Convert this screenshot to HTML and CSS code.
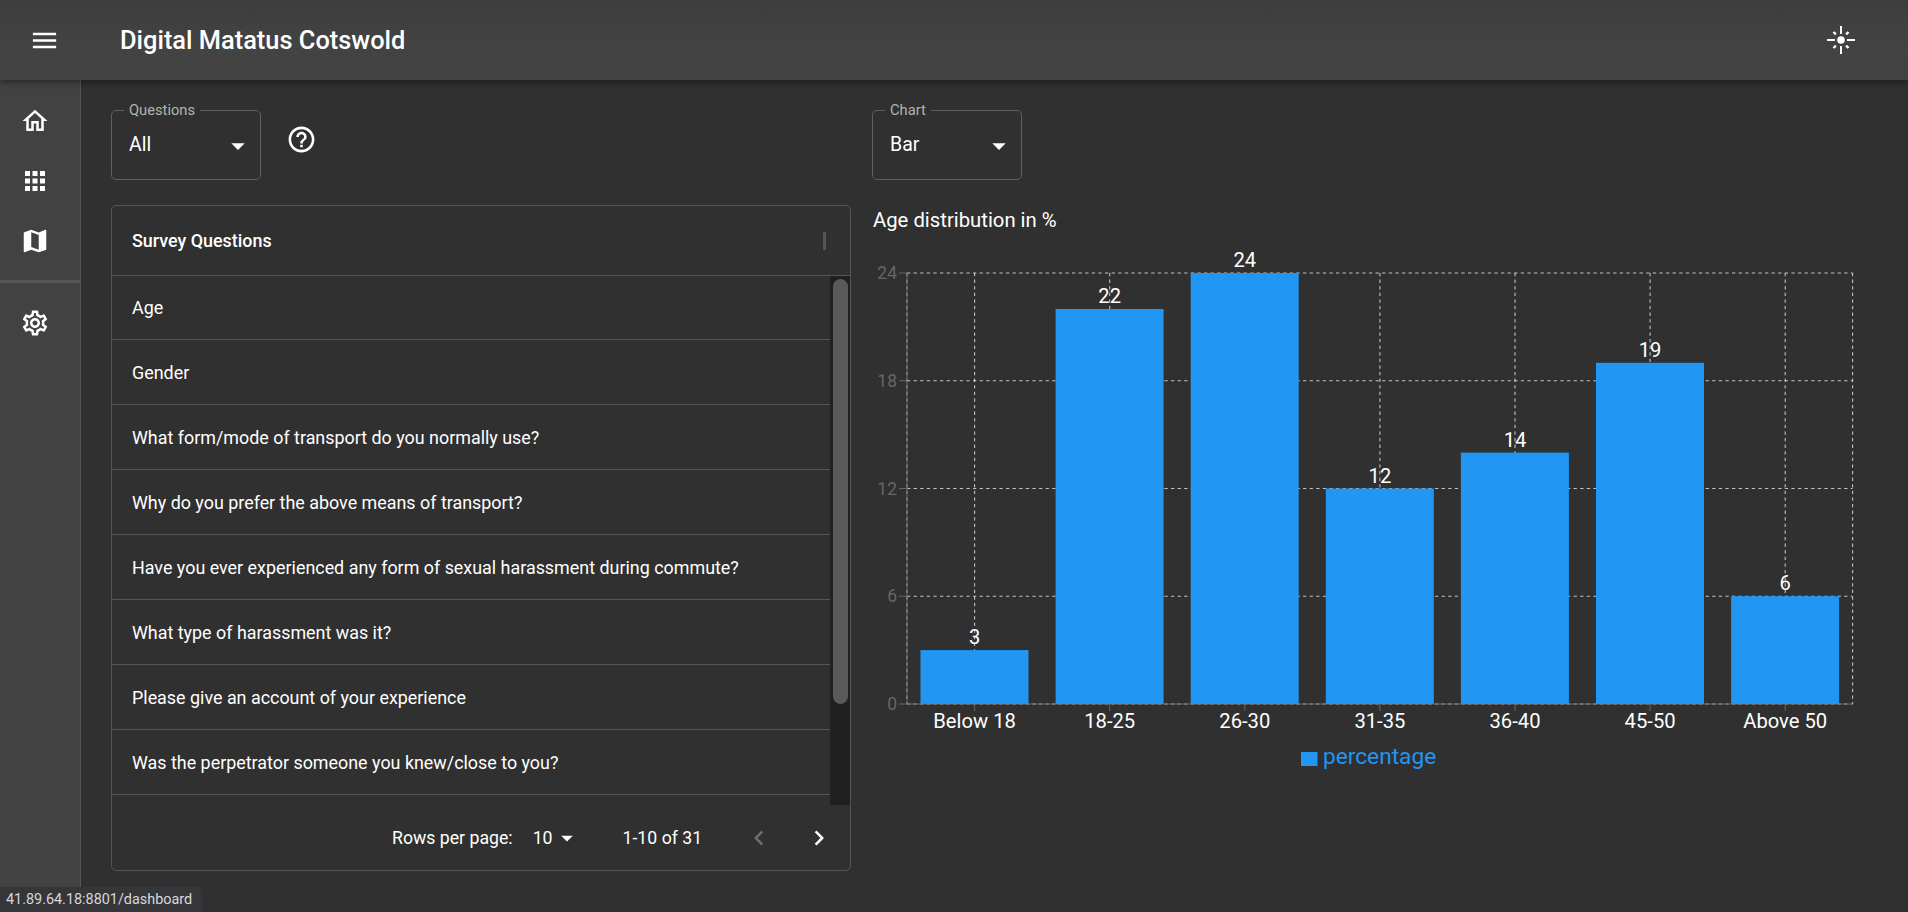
FILE: index.html
```html
<!DOCTYPE html>
<html lang="en">
<head>
    <meta charset="UTF-8">
    <meta name="viewport" content="width=device-width, initial-scale=1.0">
    <title>Digital Matatus Cotswold</title>
    <link rel="stylesheet" href="styles.css">
</head>
<body>
    <header class="topbar">
        <div class="topbar-left">
            <svg class="icon menu-icon" viewBox="0 0 24 24"><path d="M3 18h18v-2H3v2zm0-5h18v-2H3v2zm0-7v2h18V6H3z"/></svg>
            <h1 class="app-title">Digital Matatus Cotswold</h1>
        </div>
        <svg class="theme-icon" viewBox="0 0 28 28">
            <circle cx="14" cy="14" r="3.8"/>
            <rect x="13" y="0" width="2" height="8"/>
            <rect x="13" y="20" width="2" height="8"/>
            <rect x="0" y="13" width="8" height="2"/>
            <rect x="20" y="13" width="8" height="2"/>
            <rect x="6.5" y="5.5" width="2.4" height="3.4" transform="rotate(-45 7.7 7.2)"/>
            <rect x="19.1" y="5.5" width="2.4" height="3.4" transform="rotate(45 20.3 7.2)"/>
            <rect x="6.5" y="19.1" width="2.4" height="3.4" transform="rotate(45 7.7 20.8)"/>
            <rect x="19.1" y="19.1" width="2.4" height="3.4" transform="rotate(-45 20.3 20.8)"/>
        </svg>
    </header>

    <div class="layout">
        <nav class="sidebar">
            <div class="nav-group">
                <a class="nav-item"><svg class="icon nav-icon" viewBox="0 0 24 24"><path d="M12 5.69l5 4.5V18h-2v-6H9v6H7v-7.81l5-4.5M12 3L2 12h3v8h6v-6h2v6h6v-8h3L12 3z"/></svg></a>
                <a class="nav-item"><svg class="icon nav-icon" viewBox="0 0 24 24"><path d="M4 8h4V4H4v4zm6 12h4v-4h-4v4zm-6 0h4v-4H4v4zm0-6h4v-4H4v4zm6 0h4v-4h-4v4zm6-10v4h4V4h-4zm-6 4h4V4h-4v4zm6 6h4v-4h-4v4zm0 6h4v-4h-4v4z"/></svg></a>
                <a class="nav-item"><svg class="icon nav-icon" viewBox="0 0 24 24"><path d="M20.5 3l-.16.03L15 5.1 9 3 3.36 4.9c-.21.07-.36.25-.36.48V20.5c0 .28.22.5.5.5l.16-.03L9 18.9l6 2.1 5.64-1.9c.21-.07.36-.25.36-.48V3.5c0-.28-.22-.5-.5-.5zM15 19l-6-2.11V5l6 2.11V19z"/></svg></a>
            </div>
            <div class="nav-group nav-group-lower">
                <a class="nav-item"><svg class="icon nav-icon" viewBox="0 0 24 24"><path d="M19.43 12.98c.04-.32.07-.64.07-.98 0-.34-.03-.66-.07-.98l2.11-1.65c.19-.15.24-.42.12-.64l-2-3.46c-.09-.16-.26-.25-.44-.25-.06 0-.12.01-.17.03l-2.49 1c-.52-.4-1.08-.73-1.69-.98l-.38-2.65C14.46 2.18 14.25 2 14 2h-4c-.25 0-.46.18-.49.42l-.38 2.65c-.61.25-1.17.59-1.69.98l-2.49-1c-.06-.02-.12-.03-.18-.03-.17 0-.34.09-.43.25l-2 3.46c-.13.22-.07.49.12.64l2.11 1.65c-.04.32-.07.65-.07.98 0 .33.03.66.07.98l-2.11 1.65c-.19.15-.24.42-.12.64l2 3.46c.09.16.26.25.44.25.06 0 .12-.01.17-.03l2.49-1c.52.4 1.08.73 1.69.98l.38 2.65c.03.24.24.42.49.42h4c.25 0 .46-.18.49-.42l.38-2.65c.61-.25 1.17-.59 1.69-.98l2.49 1c.06.02.12.03.18.03.17 0 .34-.09.43-.25l2-3.46c.12-.22.07-.49-.12-.64l-2.11-1.65zm-1.98-1.71c.04.31.05.52.05.73 0 .21-.02.43-.05.73l-.14 1.13.89.7 1.08.84-.7 1.21-1.27-.51-1.04-.42-.9.68c-.43.32-.84.56-1.25.73l-1.06.43-.16 1.13-.2 1.35h-1.4l-.19-1.35-.16-1.13-1.06-.43c-.43-.18-.83-.41-1.23-.71l-.91-.7-1.06.43-1.27.51-.7-1.21 1.08-.84.89-.7-.14-1.13c-.03-.31-.05-.54-.05-.74s.02-.43.05-.73l.14-1.13-.89-.7-1.08-.84.7-1.21 1.27.51 1.04.42.9-.68c.43-.32.84-.56 1.25-.73l1.06-.43.16-1.13.2-1.35h1.39l.19 1.35.16 1.13 1.06.43c.43.18.83.41 1.23.71l.91.7 1.06-.43 1.27-.51.7 1.21-1.07.85-.89.7.14 1.13zM12 8c-2.21 0-4 1.79-4 4s1.79 4 4 4 4-1.79 4-4-1.79-4-4-4zm0 6c-1.1 0-2-.9-2-2s.9-2 2-2 2 .9 2 2-.9 2-2 2z"/></svg></a>
            </div>
        </nav>

        <main class="content">
            <section class="column-left">
                <div class="controls">
                    <div class="select-box">
                        <span class="select-label">Questions</span>
                        <span class="select-value">All</span>
                        <svg class="icon select-arrow" viewBox="0 0 24 24"><path d="M7 10l5 5 5-5z"/></svg>
                    </div>
                    <svg class="icon help-icon" viewBox="0 0 24 24"><path d="M11 18h2v-2h-2v2zm1-16C6.48 2 2 6.48 2 12s4.48 10 10 10 10-4.48 10-10S17.52 2 12 2zm0 18c-4.41 0-8-3.59-8-8s3.59-8 8-8 8 3.59 8 8-3.59 8-8 8zm0-14c-2.21 0-4 1.79-4 4h2c0-1.1.9-2 2-2s2 .9 2 2c0 2-3 1.75-3 5h2c0-2.25 3-2.5 3-5 0-2.21-1.79-4-4-4z"/></svg>
                </div>

                <div class="table-card">
                    <div class="table-head">
                        <span>Survey Questions</span>
                        <span class="col-sep"></span>
                    </div>
                    <div class="table-body">
                        <div class="table-rows">
                            <div class="table-row">Age</div>
                            <div class="table-row">Gender</div>
                            <div class="table-row">What form/mode of transport do you normally use?</div>
                            <div class="table-row">Why do you prefer the above means of transport?</div>
                            <div class="table-row">Have you ever experienced any form of sexual harassment during commute?</div>
                            <div class="table-row">What type of harassment was it?</div>
                            <div class="table-row">Please give an account of your experience</div>
                            <div class="table-row">Was the perpetrator someone you knew/close to you?</div>
                        </div>
                        <div class="scroll-track"><div class="scroll-thumb"></div></div>
                    </div>
                    <div class="table-foot">
                        <span class="rows-label">Rows per page:</span>
                        <span class="rows-value">10</span>
                        <svg class="icon rows-arrow" viewBox="0 0 24 24"><path d="M7 10l5 5 5-5z"/></svg>
                        <span class="page-range">1-10 of 31</span>
                        <svg class="icon page-btn page-btn-off" viewBox="0 0 24 24"><path d="M15.41 7.41L14 6l-6 6 6 6 1.41-1.41L10.83 12z"/></svg>
                        <svg class="icon page-btn" viewBox="0 0 24 24"><path d="M10 6L8.59 7.41 13.17 12l-4.58 4.59L10 18l6-6z"/></svg>
                    </div>
                </div>
            </section>

            <section class="column-right">
                <div class="controls">
                    <div class="select-box">
                        <span class="select-label">Chart</span>
                        <span class="select-value">Bar</span>
                        <svg class="icon select-arrow" viewBox="0 0 24 24"><path d="M7 10l5 5 5-5z"/></svg>
                    </div>
                </div>
                <h2 class="chart-title">Age distribution in %</h2>
                <svg class="chart" viewBox="0 -10 1000 540" width="1000" height="540">
                    <g class="grid">
                        <line x1="35" x2="980.6" y1="23" y2="23"/>
                        <line x1="35" x2="980.6" y1="130.75" y2="130.75"/>
                        <line x1="35" x2="980.6" y1="238.5" y2="238.5"/>
                        <line x1="35" x2="980.6" y1="346.25" y2="346.25"/>
                        <line x1="35" x2="980.6" y1="454" y2="454"/>
                        <line x1="35" x2="35" y1="23" y2="454"/>
                        <line x1="102.6" x2="102.6" y1="23" y2="454"/>
                        <line x1="237.7" x2="237.7" y1="23" y2="454"/>
                        <line x1="372.8" x2="372.8" y1="23" y2="454"/>
                        <line x1="507.9" x2="507.9" y1="23" y2="454"/>
                        <line x1="643" x2="643" y1="23" y2="454"/>
                        <line x1="778.1" x2="778.1" y1="23" y2="454"/>
                        <line x1="913.2" x2="913.2" y1="23" y2="454"/>
                        <line x1="980.6" x2="980.6" y1="23" y2="454"/>
                    </g>
                    <g class="axis">
                        <line x1="35" x2="35" y1="23" y2="454"/>
                        <line x1="35" x2="980.6" y1="454" y2="454"/>
                        <line x1="27" x2="35" y1="23" y2="23"/>
                        <line x1="27" x2="35" y1="130.75" y2="130.75"/>
                        <line x1="27" x2="35" y1="238.5" y2="238.5"/>
                        <line x1="27" x2="35" y1="346.25" y2="346.25"/>
                        <line x1="27" x2="35" y1="454" y2="454"/>
                        <line x1="102.6" x2="102.6" y1="454" y2="461"/>
                        <line x1="237.7" x2="237.7" y1="454" y2="461"/>
                        <line x1="372.8" x2="372.8" y1="454" y2="461"/>
                        <line x1="507.9" x2="507.9" y1="454" y2="461"/>
                        <line x1="643" x2="643" y1="454" y2="461"/>
                        <line x1="778.1" x2="778.1" y1="454" y2="461"/>
                        <line x1="913.2" x2="913.2" y1="454" y2="461"/>
                    </g>
                    <g class="y-labels">
                        <text x="25" y="29">24</text>
                        <text x="25" y="137">18</text>
                        <text x="25" y="244.5">12</text>
                        <text x="25" y="352">6</text>
                        <text x="25" y="460">0</text>
                    </g>
                    <g class="bars">
                        <rect x="48.5" y="400.1" width="108" height="53.9"/>
                        <rect x="183.6" y="59" width="108" height="395"/>
                        <rect x="318.7" y="23" width="108" height="431"/>
                        <rect x="453.8" y="238.5" width="108" height="215.5"/>
                        <rect x="588.9" y="202.6" width="108" height="251.4"/>
                        <rect x="724" y="112.8" width="108" height="341.2"/>
                        <rect x="859.1" y="346.2" width="108" height="107.8"/>
                    </g>
                    <g class="value-labels">
                        <text x="102.6" y="394">3</text>
                        <text x="237.7" y="53">22</text>
                        <text x="372.8" y="17">24</text>
                        <text x="507.9" y="232.5">12</text>
                        <text x="643" y="196.6">14</text>
                        <text x="778.1" y="106.8">19</text>
                        <text x="913.2" y="340.2">6</text>
                    </g>
                    <g class="x-labels">
                        <text x="102.6" y="477.5">Below 18</text>
                        <text x="237.7" y="477.5">18-25</text>
                        <text x="372.8" y="477.5">26-30</text>
                        <text x="507.9" y="477.5">31-35</text>
                        <text x="643" y="477.5">36-40</text>
                        <text x="778.1" y="477.5">45-50</text>
                        <text x="913.2" y="477.5">Above 50</text>
                    </g>
                    <rect class="legend-mark" x="429" y="502" width="16.5" height="14"/>
                    <text class="legend-text" x="451" y="514">percentage</text>
                </svg>
            </section>
        </main>
    </div>

    <div class="status-bar">41.89.64.18:8801/dashboard</div>
</body>
</html>
```

FILE: styles.css
```css
* {
    box-sizing: border-box;
}
html, body {
    height: 100%;
}
body {
    margin: 0;
    font-family: Roboto, "Liberation Sans", sans-serif;
    background-color: #303030;
    color: #fff;
    overflow: hidden;
    display: flex;
    flex-direction: column;
}
.icon {
    fill: currentColor;
    display: block;
    flex: none;
}

/* top bar */
.topbar {
    height: 80px;
    flex: none;
    display: flex;
    align-items: center;
    justify-content: space-between;
    padding: 0 53px 0 29px;
    background: linear-gradient(#3d3d3d, #434343 60%, #424242);
    box-shadow: 0 2px 4px -1px rgba(0, 0, 0, 0.2), 0 4px 5px 0 rgba(0, 0, 0, 0.14), 0 1px 10px 0 rgba(0, 0, 0, 0.12);
    position: relative;
    z-index: 2;
}
.topbar-left {
    display: flex;
    align-items: center;
}
.menu-icon {
    width: 31px;
    height: 31px;
}
.app-title {
    margin: 0 0 0 60px;
    font-size: 25.4px;
    font-weight: 500;
}
.theme-icon {
    width: 28px;
    height: 28px;
    fill: #fff;
}

/* layout */
.layout {
    flex: 1;
    display: flex;
    min-height: 0;
}
.sidebar {
    width: 81px;
    flex: none;
    background-color: #424242;
    border-right: 1px solid #555;
}
.nav-group {
    padding: 11px 0 9px;
    border-bottom: 3px solid #555;
}
.nav-group-lower {
    border-bottom: none;
    padding-top: 10px;
}
.nav-item {
    height: 60px;
    display: flex;
    align-items: center;
    padding-left: 20px;
}
.nav-icon {
    width: 30px;
    height: 30px;
}
.content {
    flex: 1;
    display: flex;
    gap: 21px;
    padding: 30px 0 0 30px;
    min-width: 0;
}
.column-left {
    width: 740px;
    flex: none;
}
.column-right {
    flex: 1;
    min-width: 0;
}

/* selects */
.controls {
    display: flex;
    height: 70px;
}
.select-box {
    position: relative;
    width: 150px;
    height: 70px;
    border: 1px solid #5f5f5f;
    border-radius: 5px;
    display: flex;
    align-items: flex-start;
    padding: 21px 0 0 17px;
}
.select-label {
    position: absolute;
    top: -9px;
    left: 12px;
    padding: 0 5px;
    background-color: #303030;
    color: #b3b3b3;
    font-size: 14.7px;
    line-height: 16px;
}
.select-value {
    font-size: 19.5px;
    line-height: 26px;
}
.select-arrow {
    position: absolute;
    top: 19px;
    right: 6px;
    width: 32px;
    height: 32px;
}
.help-icon {
    width: 31px;
    height: 31px;
    margin: 14px 0 0 25px;
}

/* table */
.table-card {
    margin-top: 25px;
    height: 666px;
    border: 1px solid #555;
    border-radius: 5px;
    display: flex;
    flex-direction: column;
    font-size: 17.9px;
}
.table-head {
    height: 70px;
    flex: none;
    display: flex;
    align-items: center;
    justify-content: space-between;
    padding: 0 24px 0 20px;
    font-weight: 500;
    border-bottom: 1px solid #555;
}
.col-sep {
    width: 3px;
    height: 18px;
    background-color: #555;
}
.table-body {
    flex: 1;
    min-height: 0;
    display: flex;
    overflow: hidden;
}
.table-rows {
    flex: 1;
    min-width: 0;
}
.table-row {
    height: 65px;
    display: flex;
    align-items: center;
    padding-left: 20px;
    border-bottom: 1px solid #555;
    margin-right: -1px;
}
.table-row:first-child {
    height: 64px;
}
.scroll-track {
    width: 20px;
    flex: none;
    background-color: #202020;
    padding: 3px 2px 0 3px;
    position: relative;
}
.scroll-thumb {
    height: 425px;
    background-color: #5a5a5a;
    border-radius: 8px;
}
.table-foot {
    height: 65px;
    flex: none;
    display: flex;
    align-items: center;
    padding-left: 280px;
    font-size: 17.7px;
}
.rows-value {
    margin-left: 20px;
}
.rows-arrow {
    width: 28px;
    height: 28px;
}
.page-range {
    margin-left: 42px;
}
.page-btn {
    width: 30px;
    height: 30px;
    margin-left: 30px;
}
.page-btn-off {
    margin-left: 42px;
    color: #6d6d6d;
}

/* chart */
.chart-title {
    margin: 28px 0 0 1px;
    font-size: 20.3px;
    font-weight: 400;
    line-height: 24px;
}
.chart {
    display: block;
    margin-top: 8px;
    font-family: Roboto, "Liberation Sans", sans-serif;
}
.grid line {
    stroke: rgba(255, 255, 255, 0.7);
    stroke-width: 1.1;
    stroke-dasharray: 3.3 3.3;
}
.axis line {
    stroke: #666;
}
.y-labels text {
    fill: #666;
    font-size: 17.5px;
    text-anchor: end;
}
.bars rect {
    fill: #2196f3;
}
.value-labels text,
.x-labels text {
    fill: #fff;
    font-size: 20.2px;
    text-anchor: middle;
}
.legend-mark {
    fill: #2196f3;
}
.legend-text {
    fill: #2196f3;
    font-size: 22.7px;
}

/* browser link preview */
.status-bar {
    position: fixed;
    left: 0;
    bottom: 0;
    width: 202px;
    height: 25px;
    padding-left: 6px;
    background-color: #35363a;
    border-top-right-radius: 4px;
    color: #d8d8d8;
    font-size: 14.4px;
    line-height: 25px;
    white-space: nowrap;
}
```
